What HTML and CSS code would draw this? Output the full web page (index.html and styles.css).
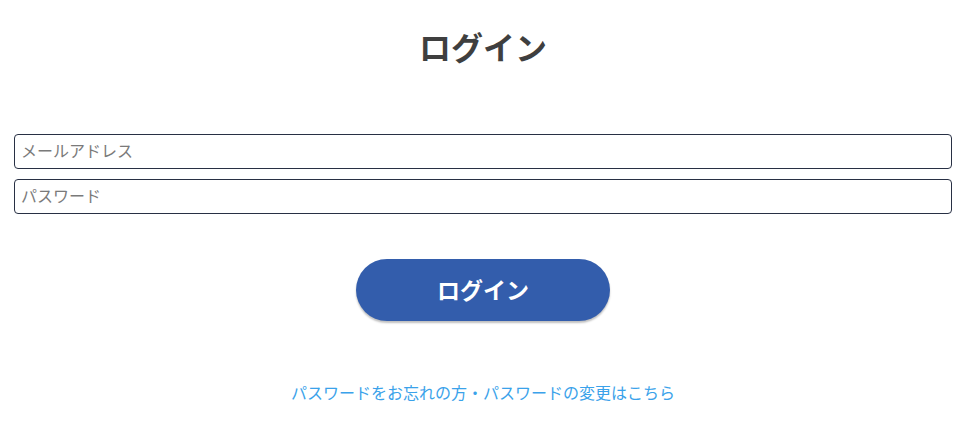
FILE: index.html
```html
<!DOCTYPE html>
<html lang="ja">
<head>
    <meta charset="UTF-8">
    <title>ログイン</title>
    <meta name="viewport" content="width=device-width, initial-scale=1.0">
    <link rel="stylesheet" href="styles.css">
</head>
<body>
    <div class="login">
        <h1 class="login-title">ログイン</h1>
        <form class="login-form">
            <input class="login-input" type="email" placeholder="メールアドレス">
            <input class="login-input" type="password" placeholder="パスワード">
            <div class="login-actions">
                <button class="login-button" type="button">ログイン</button>
            </div>
        </form>
        <p class="login-link"><a href="#">パスワードをお忘れの方・パスワードの変更はこちら</a></p>
    </div>
</body>
</html>
```

FILE: styles.css
```css
body {
    font-family: "Noto Sans CJK JP", "Noto Sans", sans-serif;
    background-color: #ffffff;
    margin: 0;
    padding: 0;
}
.login {
    padding: 0 21px 0 14px;
}
.login-title {
    text-align: center;
    color: #3f3f3f;
    font-size: 32px;
    font-weight: 700;
    line-height: 40px;
    margin: 26px 0 0;
}
.login-form {
    display: flex;
    flex-direction: column;
    gap: 10px;
    margin-top: 68px;
}
.login-input {
    box-sizing: border-box;
    width: 100%;
    height: 35px;
    padding: 0 6px 3px;
    border: 1px solid #283044;
    border-radius: 4px;
    font-family: inherit;
    font-size: 16px;
    color: #333;
}
.login-input::placeholder {
    color: #7a7a7a;
}
.login-actions {
    display: flex;
    justify-content: center;
    margin-top: 35px;
}
.login-button {
    width: 254px;
    height: 62px;
    border: none;
    border-radius: 31px;
    background-color: #335dac;
    box-shadow: 0 2px 2px rgba(0, 0, 0, 0.25);
    color: #ffffff;
    font-family: inherit;
    font-size: 23px;
    font-weight: 700;
    padding-bottom: 4px;
    cursor: pointer;
}
.login-link {
    text-align: center;
    margin: 59px 0 0;
    font-size: 16px;
}
.login-link a {
    color: #3aa2ea;
    text-decoration: none;
}
```
